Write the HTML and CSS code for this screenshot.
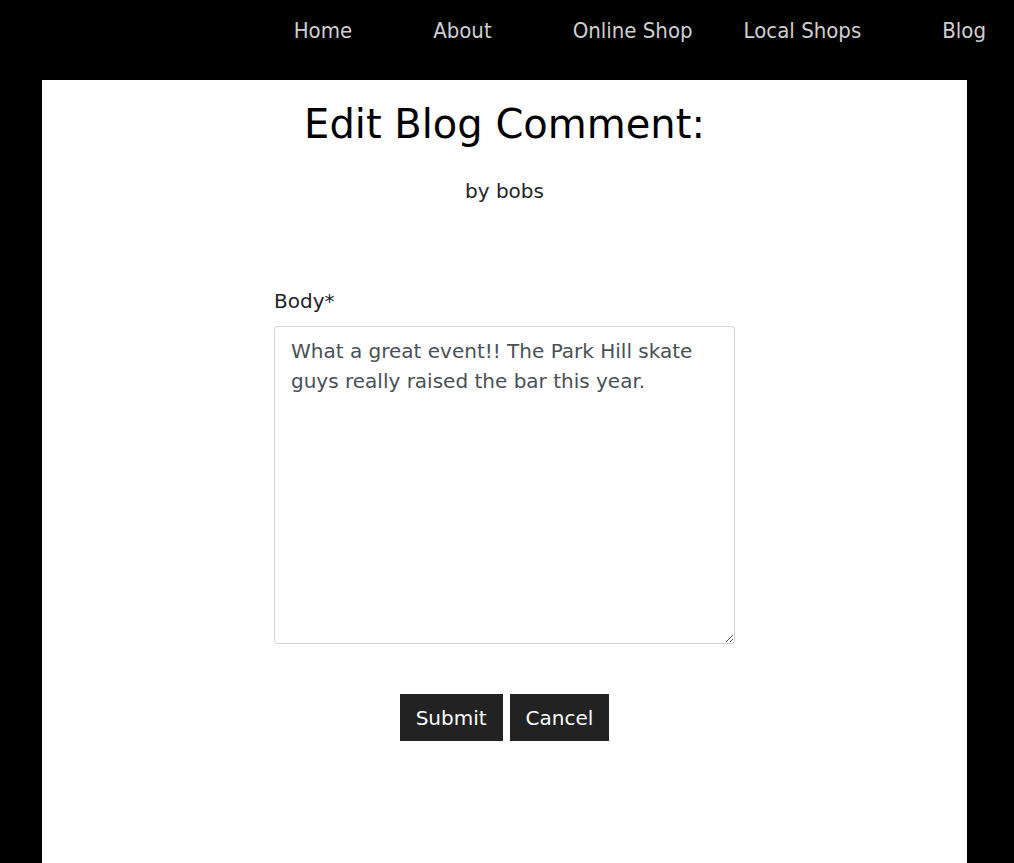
FILE: index.html
```html
<!DOCTYPE html>
<html>
<head>
<meta charset="utf-8">
<link rel="stylesheet" href="styles.css">
</head>
<body>
<nav class="topnav">
  <a class="nav-link" href="#">Home</a>
  <a class="nav-link" href="#">About</a>
  <a class="nav-link" href="#">Online Shop</a>
  <a class="nav-link nav-link-tight" href="#">Local Shops</a>
  <a class="nav-link" href="#">Blog</a>
</nav>
<main class="content">
  <h1 class="title">Edit Blog Comment:</h1>
  <p class="byline">by bobs</p>
  <form class="comment-form">
    <label class="field-label" for="body">Body*</label>
    <textarea id="body" class="field-input">What a great event!! The Park Hill skate guys really raised the bar this year.</textarea>
    <div class="actions">
      <button type="submit" class="btn">Submit</button>
      <button type="button" class="btn">Cancel</button>
    </div>
  </form>
</main>
</body>
</html>
```
FILE: styles.css
```css
html, body {
  margin: 0;
  padding: 0;
  background: #000;
  height: 100%;
}
body {
  font-family: "DejaVu Sans", Verdana, sans-serif;
  display: flex;
  flex-direction: column;
}
.topnav {
  height: 80px;
  display: flex;
  justify-content: flex-end;
  align-items: flex-start;
  padding-right: 28px;
  padding-top: 17px;
  box-sizing: border-box;
}
.nav-link {
  font-family: "DejaVu Sans Condensed", "DejaVu Sans", sans-serif;
  font-stretch: condensed;
  color: #cfcfcf;
  text-decoration: none;
  font-size: 22px;
  line-height: 28px;
  margin-left: 81px;
}
.nav-link-tight {
  margin-left: 51px;
}
.content {
  flex: 1;
  background: #fff;
  margin: 0 47px 0 42px;
  display: flex;
  flex-direction: column;
  align-items: center;
}
.title {
  margin: 16px 0 0;
  font-size: 40px;
  font-weight: normal;
  color: #000;
  line-height: 56px;
}
.byline {
  margin: 26px 0 0;
  font-size: 20px;
  color: #212529;
  line-height: 26px;
}
.comment-form {
  width: 461px;
  margin-top: 84px;
  display: flex;
  flex-direction: column;
}
.field-label {
  font-size: 20px;
  color: #212529;
  line-height: 26px;
  margin-bottom: 12px;
}
.field-input {
  height: 318px;
  box-sizing: border-box;
  border: 1px solid #ced4da;
  border-radius: 4px;
  padding: 9px 16px;
  font-family: "DejaVu Sans", Verdana, sans-serif;
  font-size: 20px;
  line-height: 30px;
  color: #495057;
  resize: vertical;
}
.actions {
  display: flex;
  justify-content: center;
  gap: 7px;
  margin-top: 50px;
}
.btn {
  background: #222;
  color: #fff;
  border: none;
  border-radius: 0;
  font-family: "DejaVu Sans", Verdana, sans-serif;
  font-size: 20px;
  height: 47px;
  padding: 0 16px;
}
```
